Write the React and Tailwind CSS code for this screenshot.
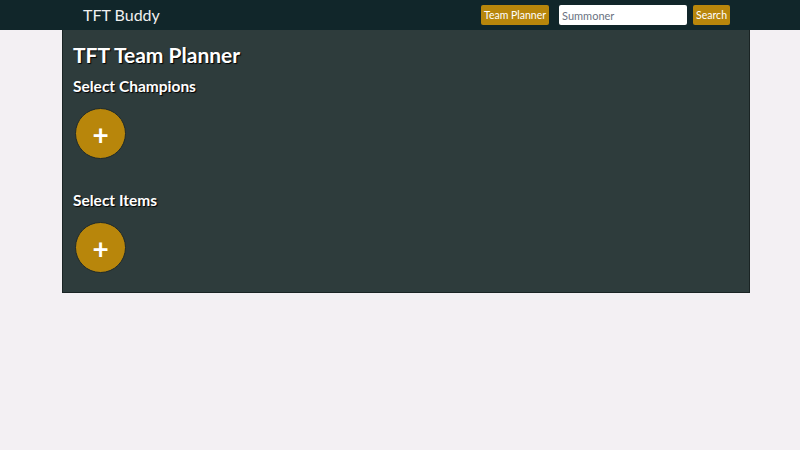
import React from 'react';

const AddButton = () => (
    <button className="w-[51px] h-[51px] rounded-full bg-[#b8860b] border border-[#1f2a2a] flex items-center justify-center text-white text-[28px] font-bold leading-none">
        +
    </button>
);

const App = () => {
    return (
        <div className="min-h-[450px] bg-[#f3f0f3]" style={{ fontFamily: 'Lato, sans-serif' }}>
            <nav className="h-[30px] bg-[#11262a] flex items-center pl-[83px] pr-[70px]">
                <span className="text-[#f0f0f0] text-[16px]">TFT Buddy</span>
                <div className="ml-auto flex items-center">
                    <button className="h-[20px] px-[3px] bg-[#b8860b] text-white text-[10.5px] leading-none rounded-[2px]">Team Planner</button>
                    <input
                        placeholder="Summoner"
                        className="ml-[10px] w-[128px] h-[20px] bg-white rounded-[2px] px-[3px] text-[11px] text-gray-700 placeholder:text-gray-500 outline-none"
                    />
                    <button className="ml-[6px] h-[20px] px-[3px] bg-[#b8860b] text-white text-[10.5px] leading-none rounded-[2px]">Search</button>
                </div>
            </nav>

            <div className="ml-[62px] w-[688px] h-[263px] bg-[#2e3c3c] border border-[#1a2424] border-t-0 px-[10px] pt-[10px]">
                <h1 className="text-white text-[21px] font-bold leading-[30px] [text-shadow:1px_1px_1px_#000]">TFT Team Planner</h1>
                <h2 className="mt-[5px] text-white text-[15.5px] font-bold leading-[22px] [text-shadow:1px_1px_1px_#000]">Select Champions</h2>
                <div className="mt-[11px] pl-[2px]">
                    <AddButton />
                </div>
                <h2 className="mt-[30px] text-white text-[15.5px] font-bold leading-[22px] [text-shadow:1px_1px_1px_#000]">Select Items</h2>
                <div className="mt-[11px] pl-[2px]">
                    <AddButton />
                </div>
            </div>
        </div>
    );
};

export default App;
